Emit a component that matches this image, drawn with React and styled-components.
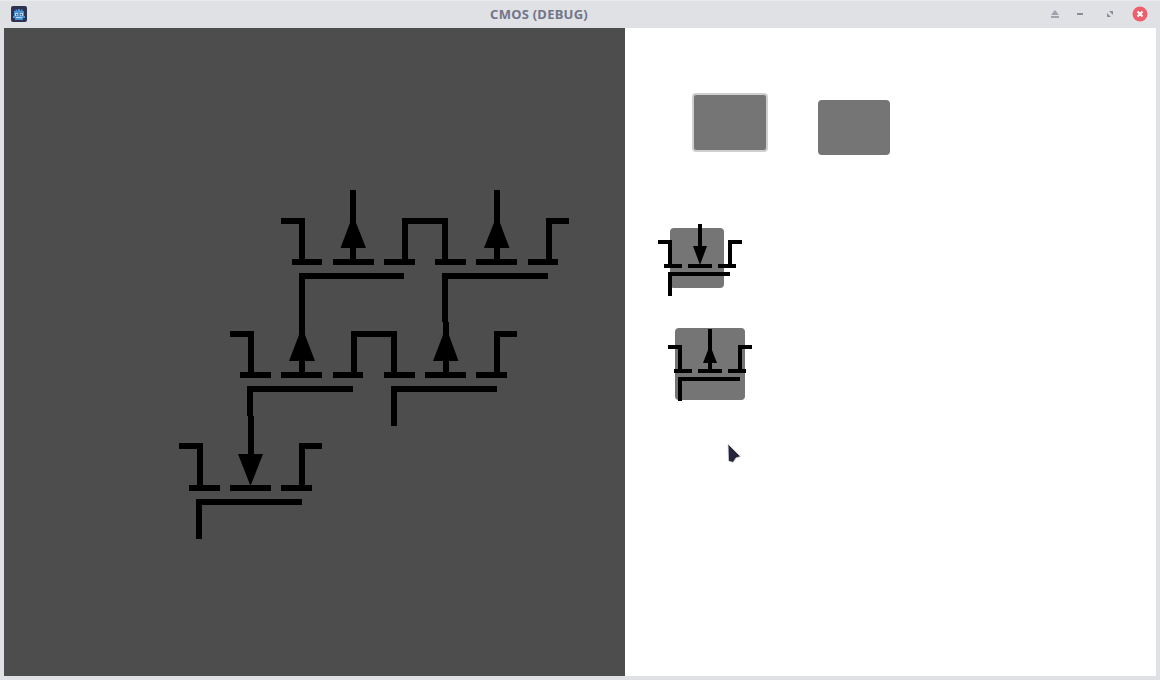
import React from "react";
import styled, { createGlobalStyle } from "styled-components";

const Global = createGlobalStyle`
  html, body { margin: 0; padding: 0; background: #e0e1e5; }
  #root { width: 1160px; height: 680px; overflow: hidden; }
`;

const Window = styled.div`
  width: 1160px;
  height: 680px;
  display: flex;
  flex-direction: column;
  background: #e0e1e5;
`;

const TitleBar = styled.header`
  height: 28px;
  flex: none;
  display: flex;
  align-items: center;
  padding: 0 12px 0 11px;
  box-shadow: inset 0 1px 0 #e9eaed;
  box-sizing: border-box;
`;

const AppIcon = styled.svg`
  width: 16px;
  height: 16px;
  flex: none;
`;

const Title = styled.div`
  flex: 1;
  text-align: center;
  font: 700 13px "Noto Sans", "Open Sans", sans-serif;
  letter-spacing: 0.25px;
  color: #70758a;
  padding-left: 4px;
`;

const Controls = styled.div`
  display: flex;
  align-items: center;
`;

const Control = styled.svg`
  width: 16px;
  height: 16px;
  flex: none;
  margin-left: ${(p) => p.$gap || 0}px;
`;

const Body = styled.main`
  flex: 1;
  display: flex;
  padding: 0 4px 4px;
  min-height: 0;
`;

const Canvas = styled.section`
  width: 621px;
  flex: none;
  background: #4d4d4d;
`;

const CircuitSvg = styled.svg`
  display: block;
  width: 621px;
  height: 648px;
`;

const Panel = styled.aside`
  flex: 1;
  position: relative;
  background: #fff;
  padding-top: 65px;
  display: flex;
  flex-direction: column;
  align-items: flex-start;
`;

const ButtonRow = styled.div`
  display: flex;
  align-items: flex-start;
  gap: 50px;
  margin-left: 67px;
`;

const ToolButton = styled.div`
  box-sizing: border-box;
  width: ${(p) => (p.$active ? 76 : 72)}px;
  height: ${(p) => (p.$active ? 59 : 55)}px;
  margin-top: ${(p) => (p.$active ? 0 : 7)}px;
  background: #757575;
  border: ${(p) => (p.$active ? "2px solid #cfcfcf" : "none")};
  border-radius: 4px;
`;

const Chip = styled.div`
  position: relative;
  background: #757575;
  border-radius: 4px;
  width: ${(p) => p.$w}px;
  height: ${(p) => p.$h}px;
  margin-top: ${(p) => p.$top}px;
  margin-left: ${(p) => p.$left}px;
`;

const ChipDrawing = styled.svg`
  position: absolute;
  left: 0;
  top: 0;
  overflow: visible;
`;

const Cursor = styled.svg`
  position: absolute;
  left: 100px;
  top: 413px;
  width: 18px;
  height: 24px;
`;

const Bars = ({ items }) =>
  items.map(([x, y, w, h], i) => (
    <rect key={i} x={x} y={y} width={w} height={h} shapeRendering="crispEdges" />
  ));

const circuitBars = [
  // top row
  [281, 218, 24, 6], [299, 218, 6, 44], [292, 259, 30, 6],
  [333, 259, 41, 6], [350, 190, 6, 69],
  [384, 259, 31, 6], [402, 218, 6, 41], [402, 218, 46, 6], [442, 218, 6, 41], [435, 259, 31, 6],
  [476, 259, 41, 6], [494, 190, 6, 69],
  [528, 259, 30, 6], [546, 218, 6, 41], [546, 218, 23, 6],
  [299, 273, 105, 6], [299, 273, 6, 99],
  [442, 273, 106, 6], [442, 273, 6, 49], [443, 322, 6, 50],
  // middle row
  [230, 331, 24, 6], [248, 331, 6, 41], [240, 372, 31, 6],
  [281, 372, 41, 6],
  [333, 372, 30, 6], [351, 331, 6, 41], [351, 331, 46, 6], [391, 331, 6, 41], [384, 372, 31, 6],
  [425, 372, 41, 6],
  [476, 372, 31, 6], [494, 331, 6, 41], [494, 331, 23, 6],
  [247, 386, 106, 6], [247, 386, 6, 30], [248, 416, 6, 50],
  [391, 386, 106, 6], [391, 386, 6, 40],
  // bottom row
  [179, 443, 24, 6], [197, 443, 6, 42], [189, 485, 31, 6],
  [230, 485, 41, 6],
  [281, 485, 31, 6], [299, 443, 6, 42], [299, 443, 23, 6],
  [196, 499, 106, 6], [196, 499, 6, 40],
];

const circuitArrows = [
  "353,215 340.5,248 366,248",
  "497,215 484,248 509.5,248",
  "302,327 289,361 315,361",
  "446,327 433,361 458.5,361",
  "250.5,486 238,454 263,454",
];

const pmosBars = [
  [658, 240, 14, 4], [668, 240, 4, 26], [664, 264, 18, 4],
  [688, 264, 24, 4], [698, 224, 4, 24],
  [718, 264, 18, 4], [728, 240, 4, 26], [728, 240, 14, 4],
  [668, 272, 62, 4], [668, 272, 4, 24],
];

const nmosBars = [
  [668, 345, 14, 4], [678, 345, 4, 26], [674, 369, 18, 4],
  [698, 369, 24, 4], [708, 329, 4, 40],
  [728, 369, 18, 4], [738, 345, 4, 26], [738, 345, 14, 4],
  [678, 377, 62, 4], [678, 377, 4, 24],
];

export default function App() {
  return (
    <Window>
      <Global />
      <TitleBar>
        <AppIcon viewBox="0 0 16 16">
          <rect width="16" height="16" rx="2" fill="#2c3350" />
          <path d="M3 5 H4.5 V3.5 H6 V4.5 H7 V3 H9 V4.5 H10 V3.5 H11.5 V5 H13 V10 H14 V12 H12 V14 H4 V12 H2 V10 H3 Z" fill="#4a8fd0" />
          <rect x="4" y="7" width="3" height="3" fill="#bcd8ee" />
          <rect x="9" y="7" width="3" height="3" fill="#bcd8ee" />
          <rect x="5" y="8" width="1.4" height="1.4" fill="#2c4a78" />
          <rect x="9.6" y="8" width="1.4" height="1.4" fill="#2c4a78" />
          <rect x="5" y="11" width="6" height="1" fill="#bcd8ee" />
        </AppIcon>
        <Title>CMOS (DEBUG)</Title>
        <Controls>
          <Control viewBox="0 0 16 16">
            <path d="M8 4 L12 9 H4 Z" fill="#a0a3ae" />
            <rect x="4" y="10" width="8" height="2" fill="#a0a3ae" />
          </Control>
          <Control viewBox="0 0 16 16" $gap={9}>
            <rect x="5" y="7" width="6" height="2" fill="#8a8e9b" />
          </Control>
          <Control viewBox="0 0 16 16" $gap={14}>
            <path d="M7 5 H11 V9 Z" fill="#8a8e9b" />
            <path d="M5 7 L9 11 H5 Z" fill="#8a8e9b" />
          </Control>
          <Control viewBox="0 0 16 16" $gap={14}>
            <circle cx="8" cy="8" r="7.5" fill="#ef5f6b" />
            <path d="M5.5 5.5 L10.5 10.5 M10.5 5.5 L5.5 10.5" stroke="#fff" strokeWidth="2" />
          </Control>
        </Controls>
      </TitleBar>
      <Body>
        <Canvas>
          <CircuitSvg viewBox="4 28 621 648" fill="#000">
            <Bars items={circuitBars} />
            {circuitArrows.map((p) => (
              <polygon key={p} points={p} />
            ))}
          </CircuitSvg>
        </Canvas>
        <Panel>
          <ButtonRow>
            <ToolButton $active />
            <ToolButton />
          </ButtonRow>
          <Chip $w={54} $h={60} $top={73} $left={45}>
            <ChipDrawing width="54" height="60" viewBox="670 228 54 60" fill="#000">
              <Bars items={pmosBars} />
              <polygon points="700,265 693,246 707,246" />
            </ChipDrawing>
          </Chip>
          <Chip $w={70} $h={72} $top={40} $left={50}>
            <ChipDrawing width="70" height="72" viewBox="675 328 70 72" fill="#000">
              <Bars items={nmosBars} />
              <polygon points="710,345 703,363 717,363" />
            </ChipDrawing>
          </Chip>
          <Cursor viewBox="0 0 18 24">
            <polygon points="3,3 15.5,15.5 11,17 8,21.5 3.5,20" fill="#23263a" stroke="#d6d7dc" strokeWidth="0.8" strokeLinejoin="round" />
          </Cursor>
        </Panel>
      </Body>
    </Window>
  );
}
